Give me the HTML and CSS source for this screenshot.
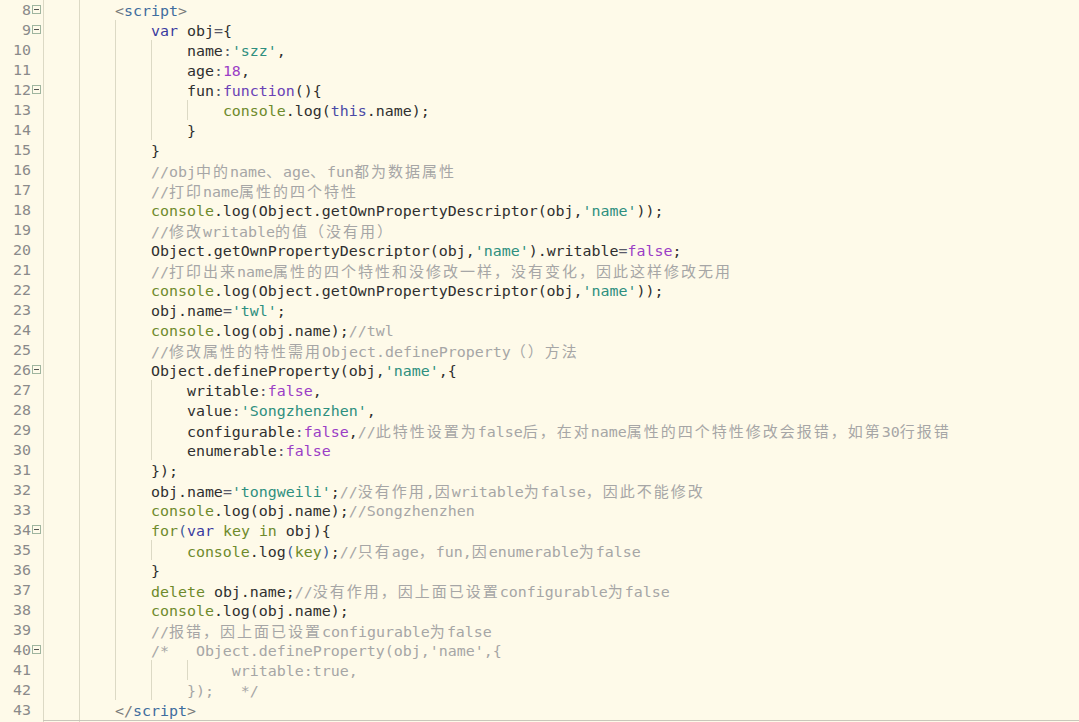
FILE: index.html
```html
<!DOCTYPE html>
<html lang="zh">
<head>
    <meta charset="UTF-8">
    <meta name="viewport" content="width=device-width, initial-scale=1.0">
    <title>defineProperty</title>
    <link rel="stylesheet" href="styles.css">
</head>
<body>
    <div class="editor">
        <div class="ln"><div class="gut"><span class="num">8</span><span class="fold"></span></div><div class="code g2">        <span class="tg">&lt;</span><span class="tn">script</span><span class="tg">&gt;</span></div></div>
        <div class="ln"><div class="gut"><span class="num">9</span><span class="fold"></span></div><div class="code g3">            <span class="k">var</span> obj<span class="op">=</span>{</div></div>
        <div class="ln"><div class="gut"><span class="num">10</span></div><div class="code g4">                name<span class="op">:</span><span class="s">'szz'</span>,</div></div>
        <div class="ln"><div class="gut"><span class="num">11</span></div><div class="code g4">                age<span class="op">:</span><span class="n">18</span>,</div></div>
        <div class="ln"><div class="gut"><span class="num">12</span><span class="fold"></span></div><div class="code g4">                fun<span class="op">:</span><span class="f">function</span>(){</div></div>
        <div class="ln"><div class="gut"><span class="num">13</span></div><div class="code g5">                    <span class="g">console</span>.log(<span class="t">this</span>.name);</div></div>
        <div class="ln"><div class="gut"><span class="num">14</span></div><div class="code g4">                }</div></div>
        <div class="ln"><div class="gut"><span class="num">15</span></div><div class="code g3">            }</div></div>
        <div class="ln"><div class="gut"><span class="num">16</span></div><div class="code g3">            <span class="c">//obj<span class="zh">中的</span>name<span class="zh">、</span>age<span class="zh">、</span>fun<span class="zh">都为数据属性</span></span></div></div>
        <div class="ln"><div class="gut"><span class="num">17</span></div><div class="code g3">            <span class="c">//<span class="zh">打印</span>name<span class="zh">属性的四个特性</span></span></div></div>
        <div class="ln"><div class="gut"><span class="num">18</span></div><div class="code g3">            <span class="g">console</span>.log(Object.getOwnPropertyDescriptor(obj,<span class="s">'name'</span>));</div></div>
        <div class="ln"><div class="gut"><span class="num">19</span></div><div class="code g3">            <span class="c">//<span class="zh">修改</span>writable<span class="zh">的值（没有用）</span></span></div></div>
        <div class="ln"><div class="gut"><span class="num">20</span></div><div class="code g3">            Object.getOwnPropertyDescriptor(obj,<span class="s">'name'</span>).writable<span class="op">=</span><span class="n">false</span>;</div></div>
        <div class="ln"><div class="gut"><span class="num">21</span></div><div class="code g3">            <span class="c">//<span class="zh">打印出来</span>name<span class="zh">属性的四个特性和没修改一样，没有变化，因此这样修改无用</span></span></div></div>
        <div class="ln"><div class="gut"><span class="num">22</span></div><div class="code g3">            <span class="g">console</span>.log(Object.getOwnPropertyDescriptor(obj,<span class="s">'name'</span>));</div></div>
        <div class="ln"><div class="gut"><span class="num">23</span></div><div class="code g3">            obj.name<span class="op">=</span><span class="s">'twl'</span>;</div></div>
        <div class="ln"><div class="gut"><span class="num">24</span></div><div class="code g3">            <span class="g">console</span>.log(obj.name);<span class="c">//twl</span></div></div>
        <div class="ln"><div class="gut"><span class="num">25</span></div><div class="code g3">            <span class="c">//<span class="zh">修改属性的特性需用</span>Object.defineProperty<span class="zh">（）方法</span></span></div></div>
        <div class="ln"><div class="gut"><span class="num">26</span><span class="fold"></span></div><div class="code g3">            Object.defineProperty(obj,<span class="s">'name'</span>,{</div></div>
        <div class="ln"><div class="gut"><span class="num">27</span></div><div class="code g4">                writable<span class="op">:</span><span class="n">false</span>,</div></div>
        <div class="ln"><div class="gut"><span class="num">28</span></div><div class="code g4">                value<span class="op">:</span><span class="s">'Songzhenzhen'</span>,</div></div>
        <div class="ln"><div class="gut"><span class="num">29</span></div><div class="code g4">                configurable<span class="op">:</span><span class="n">false</span>,<span class="c">//<span class="zh">此特性设置为</span>false<span class="zh">后，在对</span>name<span class="zh">属性的四个特性修改会报错，如第</span>30<span class="zh">行报错</span></span></div></div>
        <div class="ln"><div class="gut"><span class="num">30</span></div><div class="code g4">                enumerable<span class="op">:</span><span class="n">false</span></div></div>
        <div class="ln"><div class="gut"><span class="num">31</span></div><div class="code g3">            });</div></div>
        <div class="ln"><div class="gut"><span class="num">32</span></div><div class="code g3">            obj.name<span class="op">=</span><span class="s">'tongweili'</span>;<span class="c">//<span class="zh">没有作用</span>,<span class="zh">因</span>writable<span class="zh">为</span>false<span class="zh">，因此不能修改</span></span></div></div>
        <div class="ln"><div class="gut"><span class="num">33</span></div><div class="code g3">            <span class="g">console</span>.log(obj.name);<span class="c">//Songzhenzhen</span></div></div>
        <div class="ln"><div class="gut"><span class="num">34</span><span class="fold"></span></div><div class="code g3">            <span class="g">for</span><span class="b">(</span><span class="k">var</span> <span class="g">key</span> <span class="g">in</span> obj){</div></div>
        <div class="ln"><div class="gut"><span class="num">35</span></div><div class="code g4">                <span class="g">console</span>.log<span class="b">(</span><span class="g">key</span><span class="b">)</span>;<span class="c">//<span class="zh">只有</span>age<span class="zh">，</span>fun,<span class="zh">因</span>enumerable<span class="zh">为</span>false</span></div></div>
        <div class="ln"><div class="gut"><span class="num">36</span></div><div class="code g3">            }</div></div>
        <div class="ln"><div class="gut"><span class="num">37</span></div><div class="code g3">            <span class="g">delete</span> obj.name;<span class="c">//<span class="zh">没有作用，因上面已设置</span>configurable<span class="zh">为</span>false</span></div></div>
        <div class="ln"><div class="gut"><span class="num">38</span></div><div class="code g3">            <span class="g">console</span>.log(obj.name);</div></div>
        <div class="ln"><div class="gut"><span class="num">39</span></div><div class="code g3">            <span class="c">//<span class="zh">报错，因上面已设置</span>configurable<span class="zh">为</span>false</span></div></div>
        <div class="ln"><div class="gut"><span class="num">40</span><span class="fold"></span></div><div class="code g3">            <span class="c">/*   Object.defineProperty(obj,'name',{</span></div></div>
        <div class="ln"><div class="gut"><span class="num">41</span></div><div class="code g5">                     <span class="c">writable:true,</span></div></div>
        <div class="ln"><div class="gut"><span class="num">42</span></div><div class="code g4">                <span class="c">});   */</span></div></div>
        <div class="ln"><div class="gut"><span class="num">43</span></div><div class="code g2">        <span class="tg">&lt;/</span><span class="tn">script</span><span class="tg">&gt;</span></div></div>
        <div class="ln edge"><div class="gut"></div><div class="code g2"></div></div>
    </div>
</body>
</html>
```
FILE: styles.css
```css
body {
    margin: 0;
    padding: 0;
    background-color: #fefae9;
    overflow: hidden;
}
.editor {
    font-family: "DejaVu Sans Mono", monospace;
    font-size: 14.95px;
    color: #2f2f2f;
}
.ln {
    display: flex;
    height: 20px;
    line-height: 22px;
}
.gut {
    width: 43px;
    flex-shrink: 0;
    display: flex;
    align-items: center;
}
.num {
    width: 31px;
    text-align: right;
    color: #8a8a8a;
}
.fold {
    width: 7px;
    height: 7px;
    margin-left: 1px;
    margin-top: -2px;
    border: 1px solid #9fb59f;
    background: linear-gradient(#555, #555) center / 5px 1px no-repeat;
}
.code {
    flex: 1;
    white-space: pre;
    background-image: repeating-linear-gradient(to right, #dcd9c5 0 1px, transparent 1px 36px);
    background-repeat: no-repeat;
}
.g2 { background-size: 72px 100%; }
.g3 { background-size: 108px 100%; }
.g4 { background-size: 144px 100%; }
.g5 { background-size: 180px 100%; }
.edge .code {
    border-top: 1px solid #c9c7bb;
}
.zh {
    font-family: "Noto Sans CJK SC", sans-serif;
    font-size: 15px;
    letter-spacing: 2px;
}
.tg { color: #7a7a7a; }
.tn { color: #3e6d9e; }
.k { color: #3a3aa0; }
.op { color: #5a5a6a; }
.s { color: #2e8f7f; }
.n { color: #9b3ec6; }
.f { color: #6a42b6; }
.t { color: #4a4aa6; }
.g { color: #6e8a2c; }
.b { color: #3d5a9a; }
.c { color: #a6a6a6; }
```
